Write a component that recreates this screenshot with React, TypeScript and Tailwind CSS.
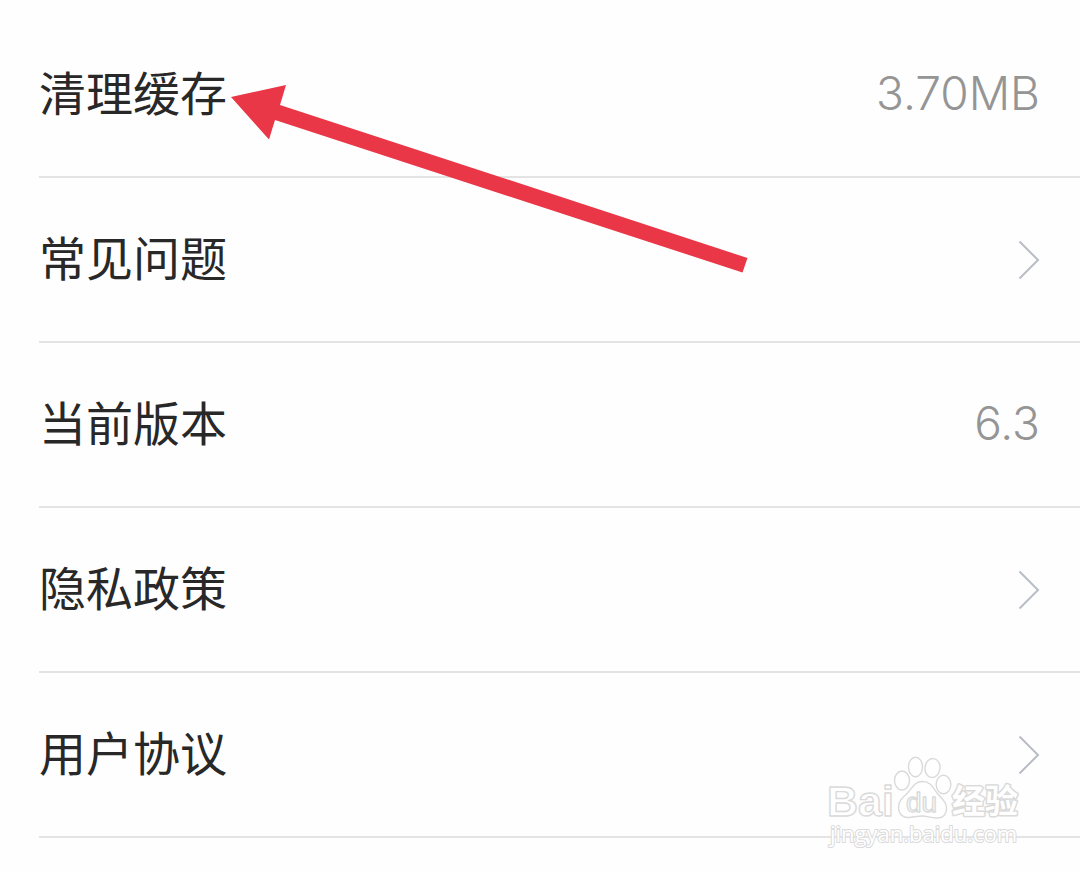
import React from 'react';

interface SettingItem {
  id: string;
  label: string;
  value?: string;
}

const items: SettingItem[] = [
  { id: 'cache', label: '清理缓存', value: '3.70MB' },
  { id: 'faq', label: '常见问题' },
  { id: 'version', label: '当前版本', value: '6.3' },
  { id: 'privacy', label: '隐私政策' },
  { id: 'terms', label: '用户协议' },
];

const Chevron = () => (
  <svg width="22" height="40" viewBox="0 0 22 40" fill="none" aria-hidden="true">
    <path d="M1.5 1.5L20 20L1.5 38.5" stroke="#b9bdc5" strokeWidth="2" />
  </svg>
);

const SettingRow = ({ item }: { item: SettingItem }) => (
  <li className="border-b-2 border-[#e4e4e4]">
    <button
      type="button"
      className="flex h-[163px] w-full items-center justify-between pr-10 text-left"
    >
      <span className="text-[47px] leading-[56px] text-[#282828]">{item.label}</span>
      {item.value ? (
        <span className="pb-1 font-['Inter','Noto_Sans_CJK_SC',sans-serif] text-[46px] leading-[56px] font-light text-[#959595]">
          {item.value}
        </span>
      ) : (
        <Chevron />
      )}
    </button>
  </li>
);

const Arrow = () => (
  <svg
    className="pointer-events-none absolute top-[80px] left-[225px]"
    width="530"
    height="200"
    viewBox="225 80 530 200"
    aria-hidden="true"
  >
    <path d="M231 97L286 85L280 105L747.5 258L742.5 272.5L275 120L269 139.5Z" fill="#e93748" />
  </svg>
);

const Watermark = () => (
  <svg
    className="pointer-events-none absolute top-[750px] right-[50px]"
    width="210"
    height="105"
    viewBox="820 750 210 105"
    fill="#ffffff"
    stroke="#dadada"
    strokeWidth="1.4"
    aria-label="Baidu 经验"
  >
    {/* Paw */}
    <ellipse cx="902" cy="780.5" rx="7.5" ry="9.5" />
    <ellipse cx="915.5" cy="767" rx="7" ry="9.8" />
    <ellipse cx="932.5" cy="768" rx="7.5" ry="9.5" transform="rotate(8 932.5 768)" />
    <ellipse cx="943.5" cy="784.5" rx="7.3" ry="9.3" />
    <path d="M922.500 781.500C914 781.500 912 789 907 793.500C902 798 898 802 898.500 808C899 814.500 903 818 909 817.500C914 817 918 816 922.500 816C927 816 932 818.500 938 818C944 817.500 946.500 813 946.500 808C946.500 801 941 798 937 793C933 788 931 781.500 922.500 781.500Z" />
    <g strokeLinejoin="round">
      <text x="827" y="816" fontSize="43" fontWeight="700" fontFamily="'Liberation Sans', sans-serif">Bai</text>
      <text x="906" y="812" fontSize="28" fontFamily="'Liberation Sans', sans-serif">du</text>
      <g paintOrder="stroke">
        <text x="952" y="813" fontSize="33" fontWeight="700" strokeWidth="3" fontFamily="'Noto Sans CJK SC', sans-serif">经验</text>
        <text x="830" y="842" fontSize="22" fontWeight="500" strokeWidth="2" fontFamily="'Open Sans', sans-serif">jingyan.baidu.com</text>
      </g>
    </g>
  </svg>
);

const App = () => {
  return (
    <main className="relative min-h-screen bg-[#fefefe] pt-[13px] font-['Roboto','Noto_Sans_CJK_SC',sans-serif]">
      <ul className="pl-[39px]">
        {items.map((item) => (
          <SettingRow key={item.id} item={item} />
        ))}
      </ul>
      <Arrow />
      <Watermark />
    </main>
  );
};

export default App;
